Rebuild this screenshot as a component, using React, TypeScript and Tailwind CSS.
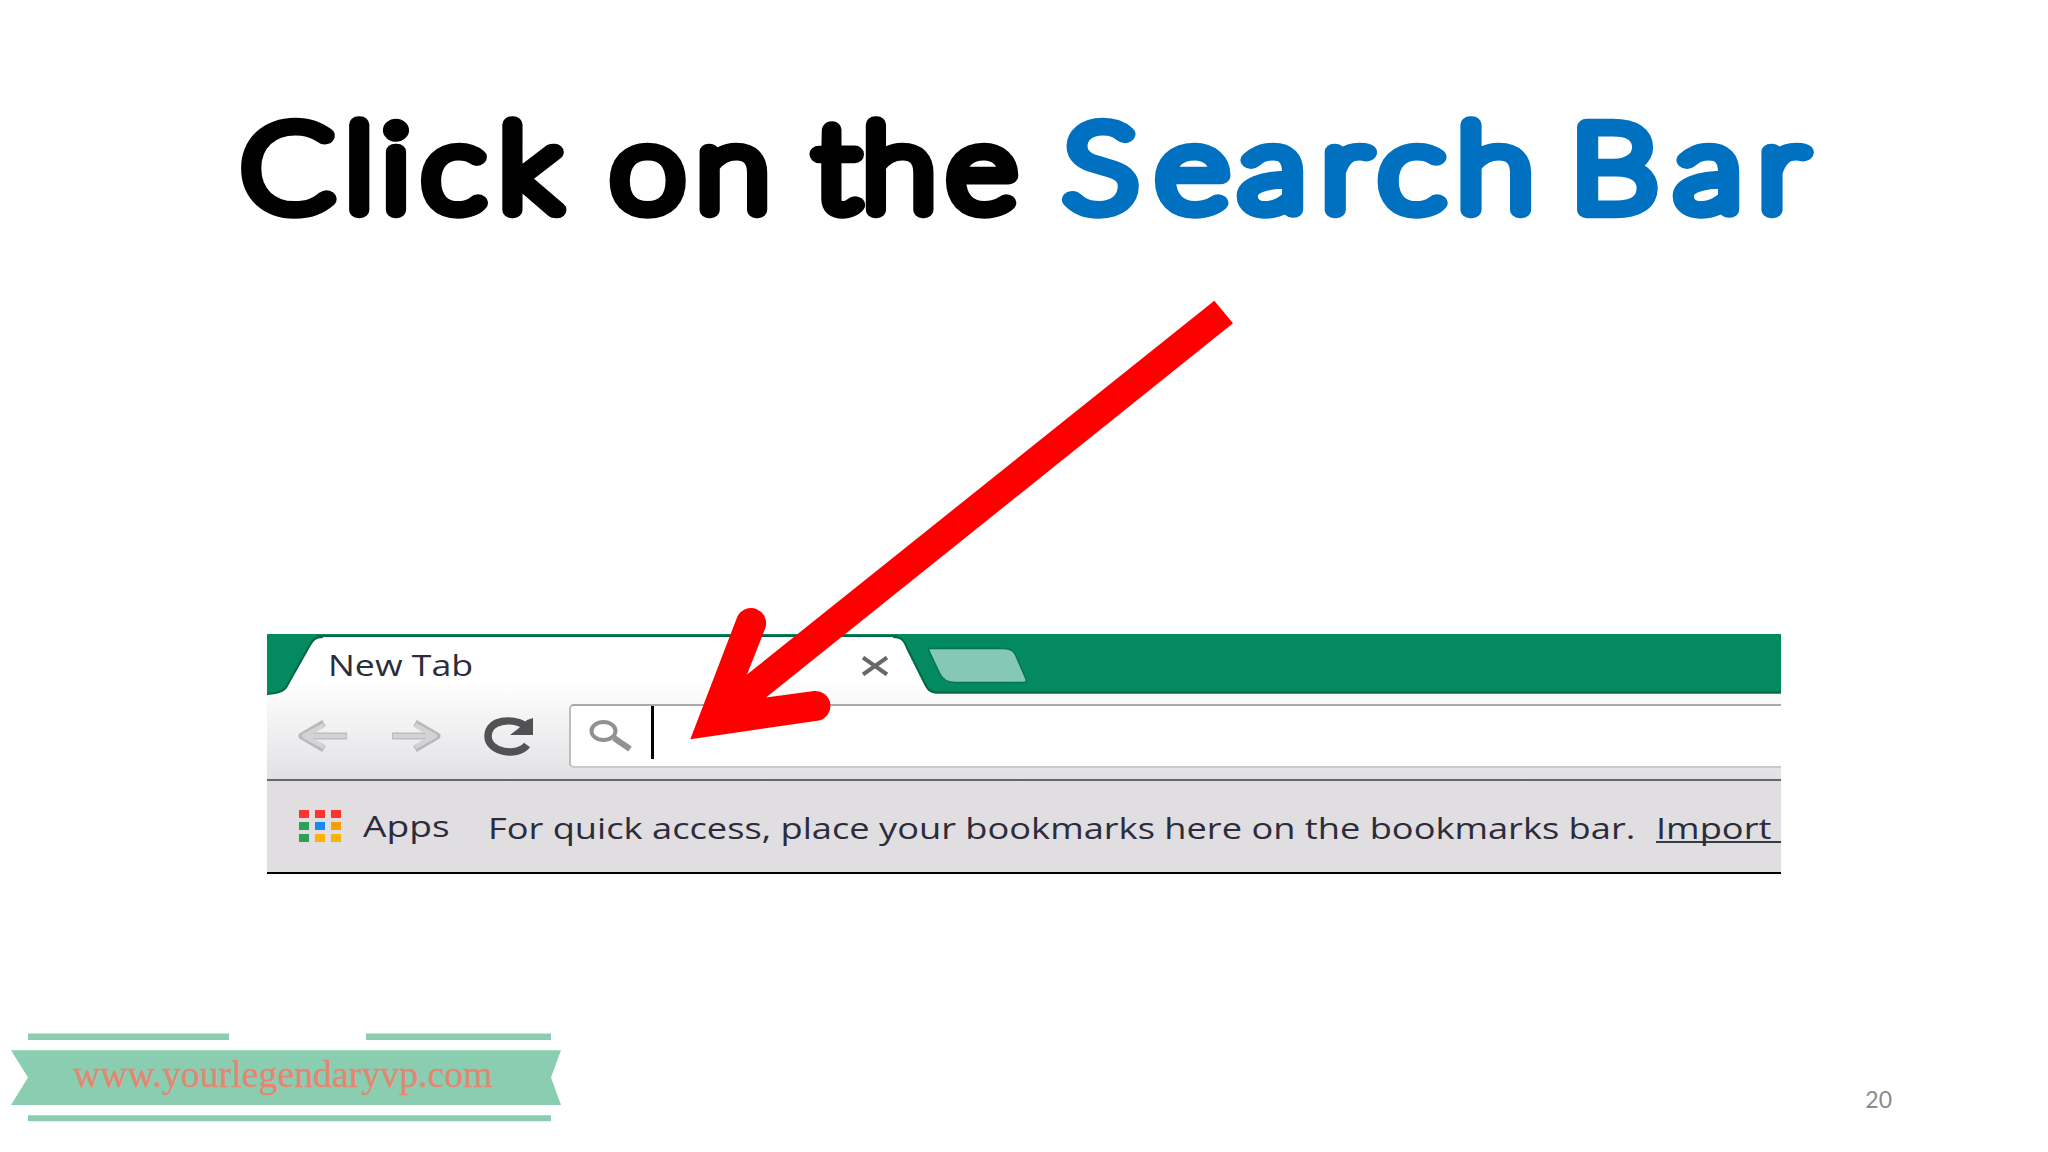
import React from "react";

const APP_COLORS: string[] = [
  "bg-[#f8352f]", "bg-[#f8352f]", "bg-[#f8352f]",
  "bg-[#2f9e58]", "bg-[#1a87f2]", "bg-[#f3a008]",
  "bg-[#2f9e58]", "bg-[#fbb004]", "bg-[#fbb004]",
];

// Word art title: thin letters under a thick round stroke
const Title: React.FC = () => (
  <h1 className="h-[290px]">
    <svg
      className="font-[Lato,sans-serif] text-[119px] font-thin"
      width="2048"
      height="290"
      viewBox="0 0 2048 290"
      strokeWidth="16.500"
      strokeLinejoin="round"
      strokeLinecap="round"
    >
      <g fill="#000000" stroke="#000000" transform="scale(1.13 1)">
        <text y="210.500" x="213.500 305.600 338.100 373.500 441.800">Click</text>
        <text y="210.500" x="540.600 616.400">on</text>
        <text y="210.500" x="720.700 763.400 838.100">the</text>
        <circle cx="349" cy="130" r="7" stroke="none" />
      </g>
      <g fill="#0070c0" stroke="#0070c0" transform="scale(1.18 1)">
        <text y="210.500" x="901.500 979.700 1050.200 1120 1168.500 1234.900">Search</text>
        <text y="210.500" x="1331 1419.700 1490.100">Bar</text>
      </g>
    </svg>
  </h1>
);

const TabStrip: React.FC = () => (
  <div className="relative h-[60px] w-full">
    <svg className="absolute inset-0" width="1514" height="62" viewBox="0 0 1514 62">
      {/* frame, left and right of the active tab */}
      <path d="M0 0H1514V59.5H671C662 59.5 660 55 658 51L640 14C637 6 634 3 626 3H56C48 3 46 6 43 11L21 50C18 57 12 59.5 0 60.5Z" fill="#038a5f" />
      <path d="M50 2H630" stroke="#02664a" strokeWidth="2" />
      <path d="M1514 58.5H671C662 58.5 660 54 658 50L640 14C637 6 634 3 626 3M56 3C48 3 46 6 43 11L21 50C18 57 12 59.5 0 60" fill="none" stroke="#04664a" strokeWidth="2" />
      {/* new tab button */}
      <path d="M663 14.5H736C744 14.5 747 17 749 22L759 45C760 48 758 48.500 756 48.500H688C680 48.500 676 46 673 40L662.500 18C661.500 15.500 661.500 14.500 663 14.500Z" fill="#85c8b5" stroke="#037652" strokeWidth="1.500" />
    </svg>
    <div className="relative flex h-full items-start">
      <span className="ml-[61px] mt-[11px] w-[533px] origin-left scale-x-[1.23] font-['Open_Sans',sans-serif] text-[29px] leading-[40px] text-[#2c2c3c]">
        New Tab
      </span>
      <svg className="mt-[22px]" width="28" height="20" viewBox="0 0 28 20">
        <path d="M2 1.500L26 18.500M26 1.500L2 18.500" stroke="#68686a" strokeWidth="4" />
      </svg>
    </div>
  </div>
);

const Toolbar: React.FC = () => (
  <div className="flex h-[85px] items-start">
    <svg className="shrink-0" width="302" height="85" viewBox="0 0 302 85">
      <g fill="none" strokeLinejoin="round">
        <path d="M80 42H36M57 29L35 42L57 55" stroke="#b9b8ba" strokeWidth="7" />
        <path d="M79 42H38M57 31L37 42L57 53" stroke="#d3d2d4" strokeWidth="4.500" />
        <path d="M125 42H169M148 29L170 42L148 55" stroke="#b9b8ba" strokeWidth="7" />
        <path d="M126 42H167M148 31L168 42L148 53" stroke="#d3d2d4" strokeWidth="4.500" />
        <path d="M257 31C246 24 221 25 221 42C221 59 251 63 260 51" stroke="#525153" strokeWidth="7.500" />
      </g>
      <path d="M266 24V41H243L252 34L260 26Z" fill="#525153" />
    </svg>
    <div className="mt-[10px] flex h-[64px] flex-1 items-start rounded-l-[5px] border-y-2 border-l-2 border-t-[#a9a8ab] border-b-[#c9c8cb] border-l-[#bdbcbf] bg-white">
      <svg className="ml-[18px] mt-[12px]" width="46" height="36" viewBox="0 0 46 36">
        <ellipse cx="14.500" cy="13" rx="12" ry="9" fill="none" stroke="#919092" strokeWidth="4" />
        <path d="M25 20L41 31" stroke="#919092" strokeWidth="6" />
      </svg>
      <span className="ml-[16px] h-[53px] w-[3px] bg-black" />
    </div>
  </div>
);

const BookmarksBar: React.FC = () => (
  <div className="flex h-[96px] items-start overflow-hidden border-t-[2px] border-b-[2px] border-t-[#69676b] border-b-black bg-[#e0dee1] font-['Open_Sans',sans-serif] text-[29px] leading-[40px] whitespace-nowrap text-[#2c2c3c]">
    <div className="ml-[32px] mt-[29px] grid shrink-0 grid-cols-3 gap-x-[6px] gap-y-[4px]">
      {APP_COLORS.map((color, i) => (
        <span key={i} className={`h-[8px] w-[10px] ${color}`} />
      ))}
    </div>
    <span className="ml-[22px] mt-[25px] w-[125px] shrink-0 origin-left scale-x-[1.28]">Apps</span>
    <span className="mt-[27px] w-[1168px] shrink-0 origin-left scale-x-[1.249]">
      For quick access, place your bookmarks here on the bookmarks bar.
    </span>
    <span className="mt-[27px] block h-[35px] w-[125px] shrink-0 border-b-[2px] border-[#3a3a44]">
      <span className="block w-[95px] origin-left scale-x-[1.25]">Import</span>
    </span>
  </div>
);

const Ribbon: React.FC = () => (
  <div className="relative h-[92px] w-[552px]">
    <svg className="absolute inset-0" width="552" height="92" viewBox="0 0 552 92">
      <g fill="#8acdb1">
        <path d="M17 3.500H218V10H17ZM355 3.500H540V10H355ZM17 85.300H540V91.300H17Z" />
        <path d="M0 20.300H550L540 47.500L550 75H0L17 47.500Z" />
      </g>
    </svg>
    <span className="relative ml-[62px] block origin-left scale-x-[0.995] pt-[23px] font-['Liberation_Serif',serif] text-[38px] leading-[42px] text-[#e58672] [-webkit-text-stroke-width:0.3px]">
      www.yourlegendaryvp.com
    </span>
  </div>
);

const App: React.FC = () => (
  <main className="relative flex h-[1152px] w-[2048px] flex-col overflow-hidden bg-white">
    <Title />

    <section className="ml-[267px] mt-[344px] flex h-[240px] w-[1514px] flex-col overflow-hidden bg-linear-to-b from-white from-20% to-[#e2e1e4] to-60%">
      <TabStrip />
      <Toolbar />
      <BookmarksBar />
    </section>

    <footer className="mt-[156px] flex items-start justify-between pl-[11px] pr-[156px]">
      <Ribbon />
      <span className="mt-[53px] font-[Lato,sans-serif] text-[23px] leading-[32px] text-[#8b8b8b]">20</span>
    </footer>

    {/* Arrow pointing at the search bar */}
    <svg className="absolute left-[680px] top-[290px]" width="570" height="460" viewBox="680 290 570 460">
      <path
        d="M690.300 739.300L737 617.500A15 15 0 0 1 765 629L747 674.500L1214.300 300.700L1233 323.300L766 697.500L814 691A15 15 0 0 1 819 720.500Z"
        fill="#ff0000"
      />
    </svg>
  </main>
);

export default App;
